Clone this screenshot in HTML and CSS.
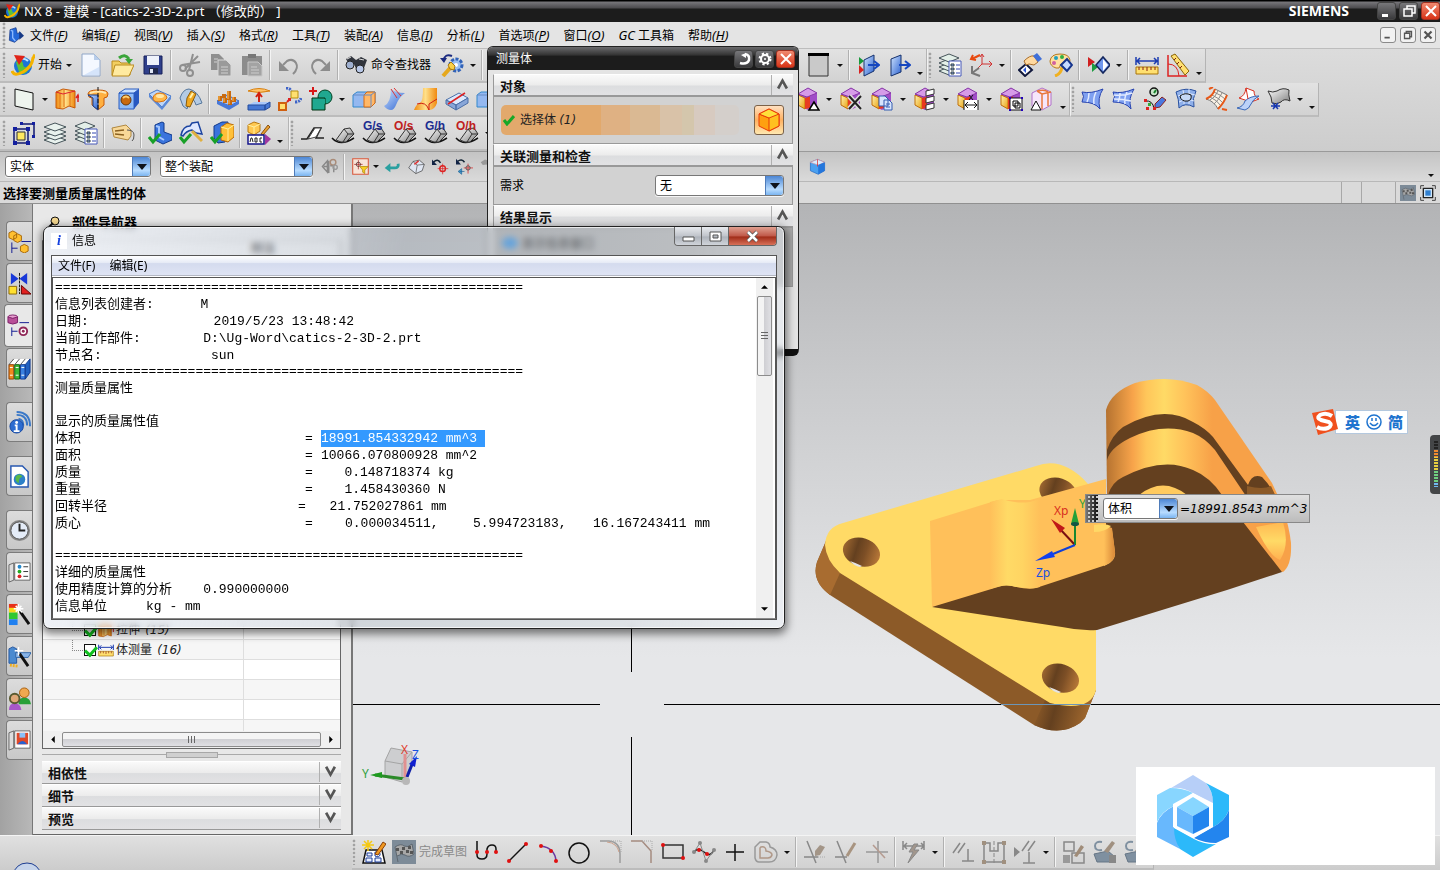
FILE: index.html
```html
<!DOCTYPE html>
<html lang="zh-CN">
<head>
<meta charset="utf-8">
<title>NX 8 - 建模</title>
<link rel="stylesheet" href="styles.css">
</head>
<body>
<svg class="sprite" aria-hidden="true">
<defs>
<linearGradient id="gb" x1="0" y1="0" x2="1" y2="1"><stop offset="0" stop-color="#cfe4ff"/><stop offset="1" stop-color="#2c62d0"/></linearGradient>
<linearGradient id="go" x1="0" y1="0" x2="1" y2="0"><stop offset="0" stop-color="#f08a10"/><stop offset=".5" stop-color="#ffe08a"/><stop offset="1" stop-color="#f08a10"/></linearGradient>
<linearGradient id="gy" x1="0" y1="0" x2="1" y2="1"><stop offset="0" stop-color="#fff3b0"/><stop offset="1" stop-color="#e8a010"/></linearGradient>
<linearGradient id="gg" x1="0" y1="0" x2="1" y2="1"><stop offset="0" stop-color="#fff"/><stop offset="1" stop-color="#7d7d7d"/></linearGradient>
</defs>
<symbol id="nx" viewBox="0 0 24 24"><circle cx="12" cy="13" r="9" fill="#1c74d8"/><path d="M5 9q6-4 7 2t6 1l-2 7q-5 4-8 0z" fill="#5cc23a"/><path d="M9 7q4-3 8 1" stroke="#bfe6ff" stroke-width="2" fill="none"/><path d="M1 18q2 6 11 1T22 5q2-2 0-3" fill="none" stroke="#f5b300" stroke-width="3"/><path d="M3 2l11 1-6 9z" fill="#e02418"/></symbol>
<symbol id="part" viewBox="0 0 24 24"><path d="M3 4l9-3 2 9 4-2v8l-8 7-8-3z" fill="#2468d8" stroke="#0d3184"/><path d="M4 5l3 1v10l4 5" stroke="#8bb9ff" stroke-width="2" fill="none"/><path d="M17 6l7 7-7 6z" fill="#173a86"/></symbol>
<symbol id="new" viewBox="0 0 24 24"><path d="M3 1h12l6 6v16H3z" fill="#f4f8ff" stroke="#8fa6c8"/><path d="M15 1v6h6z" fill="#b8cdea"/><path d="M5 22l15-8v8z" fill="#d5e4fa"/></symbol>
<symbol id="open" viewBox="0 0 24 24"><path d="M2 8h7l2 2h9v12H2z" fill="#f2cf60" stroke="#b98a1c"/><path d="M5 12h19l-5 11H2z" fill="#ffeaa0" stroke="#b98a1c"/><path d="M9 5q6-5 10 1" stroke="#3aa53a" stroke-width="3" fill="none"/><path d="M15 6h8l-4 5z" fill="#3aa53a"/></symbol>
<symbol id="save" viewBox="0 0 24 24"><path d="M3 3h18v18H3z" fill="#2f3f8a" stroke="#16205a"/><path d="M6 3h12v9H6z" fill="#eef2fb"/><path d="M8 15h9v6H8z" fill="#20284a"/><path d="M9 16h3v4H9z" fill="#dfe5f5"/></symbol>
<symbol id="cut" viewBox="0 0 24 24"><g fill="none" stroke="#8f8f8f" stroke-width="2"><path d="M7 16L20 3M11 17L15 1M4 12l18-3"/><circle cx="5" cy="15" r="3"/><circle cx="12" cy="20" r="3"/></g></symbol>
<symbol id="copy" viewBox="0 0 24 24"><path d="M2 1h8l5 5v11H2z" fill="#8f8f8f"/><path d="M9 7h8l5 5v11H9z" fill="#9a9a9a" stroke="#d8d8d8"/><path d="M12 14h7M12 17h7M12 20h7M5 6h4M5 9h3" stroke="#d0d0d0"/></symbol>
<symbol id="paste" viewBox="0 0 24 24"><path d="M2 3h20v19H2z" fill="#8c8c8c"/><path d="M8 1h8v4H8z" fill="#777"/><path d="M8 9h10l4 4v10H8z" fill="#a3a3a3" stroke="#c8c8c8"/><path d="M11 14h6M11 17h8M11 20h8" stroke="#ccc"/></symbol>
<symbol id="undo" viewBox="0 0 24 24"><path d="M16 21q6-6 3-11t-9-2l-4 4" fill="none" stroke="#8c8c8c" stroke-width="2"/><path d="M2 8v10h10z" fill="#8c8c8c"/></symbol>
<symbol id="redo" viewBox="0 0 24 24"><path d="M8 21q-6-6-3-11t9-2l4 4" fill="none" stroke="#8c8c8c" stroke-width="2"/><path d="M22 8v10H12z" fill="#8c8c8c"/></symbol>
<symbol id="binoc" viewBox="0 0 24 24"><path d="M2 6l5-3 5 4 5-3 6 3-3 8-6 5-4-9-4 2z" fill="#30343c"/><ellipse cx="6" cy="12" rx="4" ry="4" fill="#9fb0d0" stroke="#222"/><ellipse cx="16" cy="16" rx="4" ry="4" fill="#b8c8e8" stroke="#222"/><path d="M3 6l4-2M15 6l5 1" stroke="#ddd"/></symbol>
<symbol id="gear" viewBox="0 0 24 24"><circle cx="16" cy="12" r="6" fill="#9ac0f4" stroke="#3162b8" stroke-width="3" stroke-dasharray="3 1.5"/><circle cx="16" cy="12" r="2" fill="#fff"/><path d="M3 23l8-9" stroke="#e6a81c" stroke-width="4"/><path d="M8 12l3-3 4 4-1 4-4-1z" fill="#f8d04a" stroke="#a87810"/><path d="M3 8q2-8 9-5" fill="none" stroke="#1a2a80" stroke-width="2"/><path d="M0 5h7l-3 5z" fill="#1a2a80"/></symbol>
<symbol id="frame" viewBox="0 0 24 24"><path d="M2 1h19v22H2z" fill="#c9c9c9" stroke="#333"/><path d="M1 0h21v3H1z"/></symbol>
<symbol id="exita" viewBox="0 0 24 24"><path d="M8 7l10-5v16L8 23z" fill="url(#gb)" stroke="#14306c"/><path d="M3 4l5 4-5 4z" fill="#18983a"/><path d="M3 12l5 5-5 4z" fill="#d82020"/><path d="M12 12h10M18 8l5 4-5 4" fill="none" stroke="#1647c0" stroke-width="2"/></symbol>
<symbol id="exitb" viewBox="0 0 24 24"><path d="M4 6l10-4v17L4 23z" fill="url(#gb)" stroke="#14306c"/><path d="M12 12h10M18 8l5 4-5 4" fill="none" stroke="#1647c0" stroke-width="2"/></symbol>
<symbol id="layer" viewBox="0 0 24 24"><g fill="#e9f2ee" stroke="#46545a"><path d="M1 19l11-4 11 4-11 4z"/><path d="M1 15l11-4 11 4-11 4z"/><path d="M1 11l11-4 11 4-11 4z"/><path d="M1 6l11-4 11 4-11 4z"/></g></symbol>
<symbol id="layerlist" viewBox="0 0 24 24"><g fill="#e3efe8" stroke="#46545a"><path d="M1 18l10-4 10 4-10 4z"/><path d="M1 14l10-4 10 4-10 4z"/><path d="M1 10l10-4 10 4-10 4z"/><path d="M1 5l10-4 10 4-10 4z"/></g><path d="M11 8h12v15H11z" fill="#fff" stroke="#4658b8"/><path d="M13 11h3v2h-3zM13 15h3v2h-3zM13 19h3v2h-3z" fill="#8aa0e8" stroke="#344"/><path d="M18 12h4M18 16h4M18 20h4" stroke="#3448b0"/></symbol>
<symbol id="csys" viewBox="0 0 24 24"><path d="M3 6l8-4M4 2l-2 4 5 1" stroke="#e84a10" stroke-width="2" fill="none"/><path d="M13 2v9h10M11 4l2-3 2 3M20 8l3 3-3 3M13 11L8 16" stroke="#d03030" fill="none"/><path d="M3 13v7l8 3M3 20l7-5" stroke="#777" stroke-width="2" fill="none"/></symbol>
<symbol id="hand" viewBox="0 0 24 24"><path d="M1 17l7-6 6 6-7 6z" fill="#fff" stroke="#10183c" stroke-width="2"/><path d="M5 17l3-3v6z" fill="#2c58d8"/><path d="M6 8q6-6 10-5l4 6-4 3-5-1-3 1z" fill="#ffd9a0" stroke="#a86c28"/><path d="M15 3l4-3 5 6-4 3z" fill="#4070d8"/></symbol>
<symbol id="palette" viewBox="0 0 24 24"><path d="M11 1q9 0 10 6 0 5-6 4-4-1-4 2t-4 2q-6-2-6-7 1-7 10-7z" fill="#ffe0a0" stroke="#b47a20"/><circle cx="7" cy="5" r="2" fill="#20a0c0"/><circle cx="13" cy="4" r="2" fill="#30b040"/><circle cx="5" cy="10" r="2" fill="#d060a0"/><path d="M6 23q6-2 7-9" fill="none" stroke="#f0b020" stroke-width="3"/><path d="M12 12l6-6 5 6-5 6z" fill="#c5d9ff" stroke="#16348c" stroke-width="2"/></symbol>
<symbol id="showhide" viewBox="0 0 24 24"><path d="M2 4l7 5-7 5z" fill="#d02020"/><path d="M6 10l6 4-6 5z" fill="#1c9c40"/><path d="M10 12l7-8 7 8-7 8z" fill="#6f96ec" stroke="#14265c" stroke-width="1.500"/><path d="M17 6v12l5-6z" fill="#fff"/></symbol>
<symbol id="ruler" viewBox="0 0 24 24"><path d="M1 4v8M23 4v8M2 8h20M5 5L2 8l3 3M19 5l3 3-3 3" fill="none" stroke="#1c3cb0" stroke-width="1.500"/><path d="M1 14h22v7H1z" fill="#ffe070" stroke="#a87408"/><path d="M4 14v3M8 14v3M12 14v4M16 14v3M20 14v3" stroke="#8a2010"/></symbol>
<symbol id="angle" viewBox="0 0 24 24"><path d="M2 2v21h19" fill="none" stroke="#d22" stroke-width="1.500"/><path d="M2 11q10 0 11 12" fill="none" stroke="#d22"/><path d="M5 3l4-2 14 17-4 4z" fill="#ffe070" stroke="#8a6408"/><path d="M10 5l-2 2M13 9l-2 2M16 13l-2 2" stroke="#7a2010"/></symbol>
<symbol id="datum" viewBox="0 0 24 24"><path d="M3 2l18 4v17L3 19z" fill="#eef4ee" stroke="#111"/></symbol>
<symbol id="extrude" viewBox="0 0 24 24"><path d="M1 5l7-3 12 2v17l-6-2-6 3-7-1z" fill="url(#go)" stroke="#c85a08"/><path d="M5 6v15M9 3v17M15 5v14" stroke="#e07010"/><path d="M1 5l7 2 12-3" fill="none" stroke="#d23"/><path d="M23 15V8M21 11l2-3 1 3" stroke="#d22" stroke-width="1.500" fill="none"/></symbol>
<symbol id="revolve" viewBox="0 0 24 24"><path d="M2 7q0-4 10-4t10 4q0 4-4 4v7l-6 5-6-5v-7q-4 0-4-4z" fill="#ffb040" stroke="#c85a08"/><path d="M2 8l5 3v8l5 4V8z" fill="url(#gb)" stroke="#123a90"/><path d="M4 6q8-3 16 0" stroke="#ffe8b0" stroke-width="2" fill="none"/><path d="M12 0v24" stroke="#111" stroke-dasharray="4 2"/></symbol>
<symbol id="hole" viewBox="0 0 24 24"><path d="M2 6h15v16H2z" fill="#8fbcf8" stroke="#2a5cc0"/><path d="M2 6l6-4h14l-5 4z" fill="#c8e0ff" stroke="#2a5cc0"/><path d="M17 6l5-4v14l-5 6z" fill="#2858c0"/><circle cx="9" cy="13" r="5" fill="#c86a10" stroke="#6a3808"/><path d="M6 11q3-3 6 0" stroke="#ffd070" stroke-width="2" fill="none"/></symbol>
<symbol id="pocket" viewBox="0 0 24 24"><path d="M1 7l8-4 14 6-9 11z" fill="#bcd6fa" stroke="#4878c8"/><path d="M1 7v3l13 13 9-11V9l-9 11z" fill="#5c8ad8"/><path d="M5 11q1-5 7-5t7 5q-2 4-8 4t-6-4z" fill="#ffb84a" stroke="#d87010"/><ellipse cx="12" cy="9" rx="4" ry="2" fill="#ffe6a8"/></symbol>
<symbol id="groove" viewBox="0 0 24 24"><path d="M1 11Q4 2 10 2q9 2 13 14l-6 2q-2-7-6-6l-3 10-4-3z" fill="#b4cbe4" stroke="#56779c"/><path d="M8 11l4-7 5 3-6 13-4-1z" fill="#f0a820" stroke="#8c5c08"/><path d="M11 11l3-5" stroke="#fff3b0" stroke-width="2"/></symbol>
<symbol id="pattern" viewBox="0 0 24 24"><path d="M1 14l10-6 12 6-9 5z" fill="#a8c4f8" stroke="#3c68c0"/><path d="M1 14v3l12 6 10-6v-3l-9 5z" fill="#4878d8"/><path d="M4 14V9M9 16v-5M14 18v-5M8 11V7M13 13V8M18 15v-5M13 9V4" stroke="#c86a10" stroke-width="4"/><path d="M3 13V9M8 15v-4M13 17v-4M12 12V8M17 14v-4M12 8V4" stroke="#ffc058"/></symbol>
<symbol id="offset" viewBox="0 0 24 24"><path d="M1 4q11-5 22 0-11 3-22 0z" fill="#ffc468" stroke="#d88010"/><path d="M12 15V7M9 10l3-4 3 4" stroke="#d02010" stroke-width="2" fill="none"/><path d="M1 18l6-3h16l-5 3z" fill="#a9c8fa"/><path d="M1 18h17v5H1zM18 18l5-3v5l-5 3z" fill="#4678d4" stroke="#254c9c"/></symbol>
<symbol id="instance" viewBox="0 0 24 24"><path d="M1 16h7v7H1z" fill="#ffe070" stroke="#d06010" stroke-width="2"/><path d="M13 4h7v7h-7z" fill="#ffe070" stroke="#b89010"/><path d="M9 15l3-3M10 12h2v2" stroke="#d22" stroke-width="2" fill="none"/><path d="M8 1q4 0 5 3M17 15q5 0 6-4" stroke="#3d63c8" stroke-width="3" fill="none" stroke-dasharray="2 1"/></symbol>
<symbol id="bool" viewBox="0 0 24 24"><circle cx="16" cy="10" r="7" fill="#20a890" stroke="#042"/><path d="M3 11h13v12H3z" fill="#20a890" stroke="#031"/><path d="M9 12h7v5q-6-1-7-5z" fill="#20a890"/><path d="M4 0v8M0 4h8" stroke="#d81818" stroke-width="2"/></symbol>
<symbol id="trim" viewBox="0 0 24 24"><path d="M1 8l4-3h18v11l-4 4H1z" fill="#94b8f0" stroke="#38c"/><path d="M12 8l3-3h8v11l-4 4h-7z" fill="#ffb868" stroke="#d86a10"/><path d="M1 8h18v12M19 8l4-3" fill="none" stroke="#688cc4"/></symbol>
<symbol id="sheet" viewBox="0 0 24 24"><path d="M8 2q5 4 14 4-6 4-9 12-2 5-5 5-4 0-7-4 7-3 7-17z" fill="url(#gb)"/><path d="M8 2l6 9M11 1l7 8" stroke="#d33"/></symbol>
<symbol id="boot" viewBox="0 0 24 24"><path d="M9 1h14v15q-2 6-7 7H0q2-6 7-8 2-2 2-14z" fill="url(#go)"/><path d="M3 17q9-3 12 6M15 17l8-5M15 17v6" stroke="#d02010" fill="none"/></symbol>
<symbol id="split" viewBox="0 0 24 24"><path d="M1 13l13-7 9 5-12 7z" fill="#dce9fc" stroke="#4b6fa8"/><path d="M1 13v4l10 6v-5zM11 18l12-7v5l-12 7z" fill="#88a6d8" stroke="#4b6fa8"/><path d="M3 17L20 6" stroke="#d22" stroke-width="1.500"/></symbol>
<symbol id="copyface" viewBox="0 0 24 24"><path d="M2 8h14v14H2zM9 3h13v13" fill="none" stroke="#101870" stroke-width="1.500"/><path d="M5 11h8v8H5z" fill="#ffe860" stroke="#333"/><g fill="#1420a0"><path d="M1 6h4v4H1zM14 6h4v4h-4zM1 20h4v4H1zM14 20h4v4h-4zM8 1h3v3H8zM20 1h3v3h-3zM20 14h3v3h-3z"/></g></symbol>
<symbol id="tag" viewBox="0 0 24 24"><path d="M1 7l14-3 5 5v6l-3 4-14-3z" fill="#f8d898" stroke="#b08840"/><path d="M4 10l9-1M4 13l9 1" stroke="#8a6020" stroke-width="1.500"/><path d="M16 9q7 0 7 5t-2 6" fill="none" stroke="#555"/></symbol>
<symbol id="chk1" viewBox="0 0 24 24"><path d="M7 4l7-3 2 1v9l8 3v5l-9 4-8-4z" fill="#3a74dc" stroke="#123a8c"/><path d="M8 5l3 1v10l5 3" fill="none" stroke="#a6c8ff" stroke-width="2"/><path d="M1 16l4 5 7-8" fill="none" stroke="#18a028" stroke-width="3"/></symbol>
<symbol id="chk2" viewBox="0 0 24 24"><path d="M2 14q2-9 9-9l2-3 6-1 4 12-6-1-4-3q-6 1-9 6z" fill="#dfe8ff" stroke="#1c44a0" stroke-width="1.500"/><path d="M13 10l10 10" stroke="#e0b040" stroke-width="3"/><path d="M1 16l4 5 7-8" fill="none" stroke="#18a028" stroke-width="3"/></symbol>
<symbol id="chk3" viewBox="0 0 24 24"><path d="M4 5l8-4h6l-3 20-7 1-4-5z" fill="#3a74dc" stroke="#123a8c"/><path d="M11 6l6-4 7 2v12l-6 5-7-2z" fill="#ffc038" stroke="#b86808"/><path d="M11 6l7 2 6-4M18 8v12" fill="none" stroke="#fff0a0"/><path d="M1 16l4 5 7-8" fill="none" stroke="#18a028" stroke-width="3"/></symbol>
<symbol id="abc" viewBox="0 0 24 24"><path d="M1 4l6-3 6 2v7l-6 4-6-3z" fill="#ffc850" stroke="#b87810"/><path d="M1 4l6 2 6-3M7 6v7" fill="none" stroke="#fff0a0"/><path d="M14 13l7-9 2 2-7 8z" fill="#e8a030" stroke="#8a5010"/><path d="M1 14h16v9H1z" fill="#fff" stroke="#15158a" stroke-width="1.500"/><path d="M3 21l1-4h1l1 4M8 17h2v4H8zM15 17h-2v4h2" fill="none" stroke="#222"/><path d="M18 13l6 5-6 6z" fill="#a038a0"/></symbol>
<symbol id="prism0" viewBox="0 0 24 24"><path d="M1 18h6l7-11h7l-5 10h8" fill="#e8e8e8" stroke="#222" stroke-width="1.500"/><path d="M8 18l7-11h6l-5 9z" fill="#fff" stroke="#444"/></symbol>
<symbol id="prism" viewBox="0 0 24 24"><path d="M1 17q8 9 22 0" fill="none" stroke="#111" stroke-width="1.500"/><path d="M5 19l8-11 6-1 4 6-8 8q-5 1-10-2z" fill="url(#gg)" stroke="#333"/><path d="M13 8l4 5-5 8M17 13l6 0" fill="none" stroke="#333"/></symbol>
<symbol id="face" viewBox="0 0 24 24"><path d="M2 7l10-6 9 5v12l-9 5-10-5z" fill="#a04cc8"/><path d="M2 8l7 3v11l-7-4z" fill="url(#gy)" stroke="#c07008"/><path d="M9 11l5-2v12l-5 1z" fill="#e83a20"/><path d="M2 7l10-6 9 5-10 4z" fill="#d69be8" stroke="#8838a8"/></symbol>
<symbol id="m-tri" viewBox="0 0 24 24"><path d="M13 23l5-8 5 8z" fill="#fff" stroke="#000" stroke-width="1.500"/></symbol>
<symbol id="m-x" viewBox="0 0 24 24"><path d="M10 9l12 13M22 9L10 22" stroke="#ddd" stroke-width="5"/><path d="M10 9l12 13M22 9L10 22" stroke="#222" stroke-width="2"/></symbol>
<symbol id="m-copy" viewBox="0 0 24 24"><path d="M9 9h6l3 3v7H9zM14 13h5l3 3v7h-8z" fill="#d6e4fc" stroke="#345cb0"/><path d="M16 17h4M16 20h4" stroke="#345cb0"/></symbol>
<symbol id="m-list" viewBox="0 0 24 24"><path d="M13 4l8-2v5l-8 2zM13 11l8-2v5l-8 2zM13 18l8-2v5l-8 2z" fill="#fff" stroke="#333"/></symbol>
<symbol id="m-dist" viewBox="0 0 24 24"><path d="M8 13h14v10H8z" fill="#fff"/><path d="M8 13v10M22 13v10M9 18h12M12 15l-3 3 3 3M18 15l3 3-3 3M13 8l4 5M17 8l-4 5" stroke="#111" fill="none"/></symbol>
<symbol id="m-sq" viewBox="0 0 24 24"><path d="M11 11h12v12H11z" fill="#fff" stroke="#111"/><path d="M14 14h5v5h-5zM16 16h5v5h-5z" fill="none" stroke="#000"/><path d="M10 10h2v2h-2zM22 10h2v2h-2zM10 22h2v2h-2zM22 22h2v2h-2z" fill="#20b"/></symbol>
<symbol id="ghost" viewBox="0 0 24 24"><path d="M2 6l10-5 9 4v13l-9 5-10-4z" fill="#f6e6fa" stroke="#b070c8"/><path d="M7 4l5 3v15M12 7l9-2M7 4q8-2 11 1v14" fill="none" stroke="#e8783c" stroke-width="1.500"/><path d="M1 23l5-9 5 9z" fill="#fff" stroke="#111"/></symbol>
<symbol id="surf1" viewBox="0 0 24 24"><path d="M1 5Q10 7 22 2 16 11 19 22 14 15 1 15 4 9 1 5z" fill="#7fa0f0" stroke="#2844b0"/><path d="M8 6q0 5-2 9M15 5q-3 6-2 12" fill="none" stroke="#e4ecff" stroke-width="1.500"/></symbol>
<symbol id="surf2" viewBox="0 0 24 24"><path d="M1 5Q10 7 22 2 16 11 19 22 14 15 1 15 4 9 1 5z" fill="#7fa0f0" stroke="#2844b0"/><path d="M8 6q0 5-2 9M15 5q-3 6-2 12M2 8q10 1 18-2M2 12q9 0 17 2" fill="none" stroke="#e4ecff" stroke-width="1.500"/></symbol>
<symbol id="studio" viewBox="0 0 24 24"><circle cx="11" cy="5" r="4" fill="#c9e6c9" stroke="#111" stroke-width="1.500"/><path d="M13 3l-2 3" stroke="#19822a" stroke-width="2"/><path d="M2 14q8-1 9 8" fill="none" stroke="#111"/><path d="M12 17l7-7 4 3-6 7-5 1z" fill="#4a78e0" stroke="#822"/><path d="M1 12h3v3H1zM3 20h3v3H3zM10 20h3v3h-3z" fill="#d22"/><path d="M5 16h3v3H5z" fill="#3a3"/></symbol>
<symbol id="surf3" viewBox="0 0 24 24"><path d="M2 5Q12 0 22 4 18 11 20 20 11 15 5 21 5 12 2 5z" fill="#8fb0ea" stroke="#2850a0"/><path d="M4 9q9-4 17-1M5 15q8-4 15-1M9 3q2 8 1 14M15 2q0 8 0 15" fill="none" stroke="#dfe9ff"/><path d="M6 9q5-4 11-1 1 5-3 6-7 1-8-5z" fill="#c6d8f6" stroke="#111"/></symbol>
<symbol id="surf4" viewBox="0 0 24 24"><path d="M1 12Q8 9 10 2l12 6q-3 8-9 14Q9 14 1 12z" fill="#fbf3e6" stroke="#777"/><path d="M5 10q7 3 11 9M7 8q7 3 11 8M9 5q7 3 11 7M17 6q-4 8-8 11M13 4q-3 7-8 9" fill="none" stroke="#888"/><path d="M1 12Q8 9 10 2M22 8q-3 8-9 14M4 2l4-2M17 22l5 1" fill="none" stroke="#e85818" stroke-width="2"/></symbol>
<symbol id="surf5" viewBox="0 0 24 24"><path d="M3 11Q9 9 10 1l8 3q0 6 5 8l-8 3z" fill="#fff" stroke="#d83020"/><path d="M1 21Q7 20 9 14q5-5 14-5-6 3-8 8-2 5-6 6z" fill="#bcd2f8" stroke="#3a68b8"/><path d="M10 1l2 11" stroke="#d83020"/></symbol>
<symbol id="surf6" viewBox="0 0 24 24"><path d="M1 4q5 2 9 0 6-4 12-1-1 4 1 11-6-3-9 1-4 3-9 1 0-6-4-12z" fill="url(#gg)" stroke="#333"/><path d="M6 16l5 6M11 16l-5 6M4 19h9" stroke="#1838b0" stroke-width="1.500"/></symbol>
<symbol id="link" viewBox="0 0 24 24"><path d="M2 12l7-8v16zM11 4v17M13 11h5v9M4 12h7" fill="none" stroke="#888" stroke-width="2"/><circle cx="17" cy="6" r="4" fill="none" stroke="#a98b78" stroke-width="2"/><circle cx="20" cy="13" r="3" fill="none" stroke="#999" stroke-width="2"/></symbol>
<symbol id="selfilter" viewBox="0 0 24 24"><path d="M1 1h22v22H1z" fill="#f7e4d8" stroke="#d8583c" stroke-width="1.500"/><path d="M9 3v13M3 9h12" stroke="#a22"/><circle cx="9" cy="9" r="3" fill="none" stroke="#422"/><path d="M11 12h12l-5 5v5l-3-2v-3z" fill="#f8d020" stroke="#a88408"/></symbol>
<symbol id="turn" viewBox="0 0 24 24"><path d="M5 14h10q6 0 5-6" fill="none" stroke="#2aa0a0" stroke-width="4"/><path d="M9 7v13l-8-6z" fill="#2aa0a0"/></symbol>
<symbol id="eraser" viewBox="0 0 24 24"><path d="M1 14l6-9 9-2 7 6-3 9-9 4z" fill="#dfe6f2" stroke="#444"/><path d="M7 5l6 5-2 12M13 10l10-1" fill="none" stroke="#555"/><path d="M9 9l6-5" stroke="#d33" stroke-width="2"/></symbol>
<symbol id="pickb" viewBox="0 0 24 24"><path d="M2 6q6-6 10 1" fill="none" stroke="#123" stroke-width="2"/><path d="M0 2v8h7z" fill="#124"/><path d="M15 8v15M8 15h15" stroke="#d22"/><circle cx="15" cy="15" r="4" fill="none" stroke="#d22" stroke-width="2"/></symbol>
<symbol id="pickc" viewBox="0 0 24 24"><path d="M2 5q6-5 10 1" fill="none" stroke="#123" stroke-width="2"/><path d="M0 1v8h7z" fill="#124"/><path d="M17 8v14M11 14h13" stroke="#d22"/><circle cx="17" cy="14" r="3" fill="none" stroke="#333"/><path d="M12 19H5M8 15l-5 4 5 4z" fill="#49c" stroke="#269"/></symbol>
<symbol id="hammer" viewBox="0 0 24 24"><path d="M1 6l6-4 9 3 6 10-4 7-3-10-6-3-5 1z" fill="#999"/></symbol>
<symbol id="cubeb" viewBox="0 0 24 24"><path d="M2 6l10-4 10 4v12l-9 5-11-5z" fill="#4aa0f0" stroke="#2468c0"/><path d="M2 6l11 4 9-4-10-4z" fill="#d4ecff" stroke="#e09aa0"/><path d="M13 10v13l9-5V6z" fill="#2476dc"/><path d="M12 2v10" stroke="#d22"/></symbol>
<symbol id="flag" viewBox="0 0 24 24"><path d="M0 0h24v24H0z" fill="#7d8b98"/><path d="M6 22L3 7q6-4 9-1 4 2 8-2l2 10q-5 4-9 1-3-2-8 1" fill="#a7a7a7" stroke="#5d6770"/><path d="M4 8h3v3H4zM10 7h3v3h-3zM16 6h3v3h-3zM8 11h3v3H8zM14 10h3v3h-3zM18 11h3v3h-3z" fill="#555"/></symbol>
<symbol id="fullscr" viewBox="0 0 24 24"><path d="M1 6V1h5M18 1h5v5M23 18v5h-5M6 23H1v-5" fill="none" stroke="#444" stroke-width="1.500"/><path d="M5 5h14v14H5z" fill="#cfe5f7" stroke="#222" stroke-width="2"/><path d="M8 8h8v8H8z" fill="#2f7fd0"/></symbol>
<symbol id="sketch" viewBox="0 0 24 24"><path d="M4 10h16l3 13H1z" fill="#fff" stroke="#111" stroke-width="1.500"/><path d="M5 13h5v3H5zM4 18h6v4H4zM13 12q6 0 5 3t-5 1zM13 18h6v4h-6z" fill="#e8efff" stroke="#1c3c98"/><path d="M6 0v11M0 5h12M2 1l8 8M10 1L2 9" stroke="#f5c810" stroke-width="1.500"/><path d="M13 14l8-12 3 2-8 11z" fill="#f09820" stroke="#8a4008"/></symbol>
<symbol id="profile" viewBox="0 0 24 24"><path d="M2 1v14q0 4 5 4t5-5V9q1-4 5-4t4 4v4" fill="none" stroke="#111" stroke-width="1.500"/><g fill="#e01010"><circle cx="2" cy="12" r="2"/><circle cx="12" cy="12" r="2"/><circle cx="21" cy="12" r="2"/></g></symbol>
<symbol id="line" viewBox="0 0 24 24"><path d="M3 21L20 4" stroke="#111" stroke-width="1.500"/><circle cx="3" cy="21" r="2" fill="#e01010"/><circle cx="20" cy="4" r="2" fill="#e01010"/></symbol>
<symbol id="arc" viewBox="0 0 24 24"><path d="M4 6q14 2 15 15" fill="none" stroke="#6a3aa0" stroke-width="1.500"/><g fill="#e01010"><circle cx="4" cy="6" r="2"/><circle cx="14" cy="11" r="2"/><circle cx="19" cy="21" r="2"/></g></symbol>
<symbol id="circle" viewBox="0 0 24 24"><circle cx="11" cy="13" r="10" fill="none" stroke="#111" stroke-width="1.500"/></symbol>
<symbol id="fillet" viewBox="0 0 24 24"><path d="M1 1h9q11 1 11 13v9" fill="none" stroke="#9c9c9c" stroke-width="1.500"/><path d="M8 2q10 1 12 10" fill="none" stroke="#cda28c"/><path d="M12 1h10v11" fill="none" stroke="#aaa" stroke-dasharray="1 1"/></symbol>
<symbol id="chamfer" viewBox="0 0 24 24"><path d="M1 1h11l9 10v12" fill="none" stroke="#a58c80" stroke-width="1.500"/><path d="M12 1h10v10" fill="none" stroke="#aaa" stroke-dasharray="1 1"/></symbol>
<symbol id="rect" viewBox="0 0 24 24"><path d="M2 5h20v13H2z" fill="none" stroke="#333" stroke-width="1.500"/><circle cx="2" cy="5" r="2" fill="#e01010"/><circle cx="22" cy="18" r="2" fill="#e01010"/></symbol>
<symbol id="spline" viewBox="0 0 24 24"><path d="M2 12Q6 8 9 10t6 4q4 2 7-4" fill="none" stroke="#222" stroke-width="1.500"/><path d="M2 12L8 3l6 18 8-11" fill="none" stroke="#888"/><g fill="#888"><circle cx="8" cy="3" r="2"/><circle cx="2" cy="12" r="2"/><circle cx="14" cy="21" r="2"/><circle cx="22" cy="10" r="2"/></g><g fill="#e01010"><circle cx="7" cy="10" r="2"/><circle cx="15" cy="14" r="2"/></g></symbol>
<symbol id="plus" viewBox="0 0 24 24"><path d="M12 4v17M3 12h18" stroke="#111" stroke-width="1.500"/></symbol>
<symbol id="offs" viewBox="0 0 24 24"><path d="M6 2h6q4 1 4 5 7 2 7 8-1 7-8 7H5q-3 0-4-4V7z" fill="none" stroke="#999" stroke-width="1.500"/><path d="M7 7q5-1 5 4 6 1 6 4-1 3-4 3H6V8z" fill="none" stroke="#b09888" stroke-width="1.500"/></symbol>
<symbol id="qtrim" viewBox="0 0 24 24"><path d="M1 17h14M4 1l9 22" stroke="#888" stroke-width="1.500"/><path d="M15 17h8" stroke="#aaa" stroke-dasharray="1 1"/><path d="M12 11l5-6 5 2-5 8-5 1z" fill="#a39587"/></symbol>
<symbol id="qext" viewBox="0 0 24 24"><path d="M1 17h12M3 1l9 22" stroke="#888" stroke-width="1.500"/><path d="M13 16l8-13" stroke="#a89480" stroke-width="3"/></symbol>
<symbol id="corner" viewBox="0 0 24 24"><path d="M13 1v22M1 12h22" stroke="#999" stroke-width="1.500"/><path d="M8 5l12 13" stroke="#b59b90" stroke-width="1.500"/></symbol>
<symbol id="dim" viewBox="0 0 24 24"><path d="M1 1v9M22 1v9M2 6h20M5 3L2 6l3 3M19 3l3 3-3 3" stroke="#888" fill="none" stroke-width="1.500"/><path d="M12 4L7 12h4L6 23l11-13h-5l4-6z" fill="#a2968c" stroke="#888"/></symbol>
<symbol id="cons" viewBox="0 0 24 24"><path d="M2 13L9 3M7 13l7-10M17 9v12M11 21h12" stroke="#888" stroke-width="1.500"/></symbol>
<symbol id="auto" viewBox="0 0 24 24"><path d="M2 3v19h20V3h-6v8H8V3z" fill="none" stroke="#888" stroke-width="1.500"/><path d="M12 1v22" stroke="#888" stroke-dasharray="4 2"/><path d="M0 1h4v4H0zM20 1h4v4h-4zM0 20h4v4H0zM20 20h4v4h-4z" fill="#a0907f"/></symbol>
<symbol id="cons2" viewBox="0 0 24 24"><path d="M1 7l6 5-6 5z" fill="#888"/><path d="M9 11L16 1M15 11l7-10M16 12v11M10 23h12" stroke="#888" stroke-width="1.500"/></symbol>
<symbol id="pencilbox" viewBox="0 0 24 24"><path d="M2 2h10v9H2zM10 13h12v10H10z" fill="none" stroke="#888" stroke-width="1.500"/><path d="M1 15h7v8H1z" fill="#999"/><path d="M12 16l7-11 3 2-7 10z" fill="#a08c78"/></symbol>
<symbol id="tools" viewBox="0 0 24 24"><path d="M9 2Q2 1 2 6t7 4" fill="none" stroke="#7f90a0" stroke-width="2"/><path d="M1 14l14-3 7 6-4 5H4z" fill="#7f90a0" stroke="#667686"/><path d="M11 11l8-10 3 2-7 10z" fill="#a09080"/><path d="M16 15h7v8h-7z" fill="#888"/></symbol>
<symbol id="asm" viewBox="0 0 24 24"><g fill="#ffc030" stroke="#a86808"><path d="M1 3l4-2 4 2v5l-4 2-4-2zM6 6l4-2 4 2v5l-4 2-4-2zM13 17l4-2 4 2v5l-4 2-4-2z"/></g><path d="M4 13v11M4 19h6M14 12h10" stroke="#101890"/></symbol>
<symbol id="constr" viewBox="0 0 24 24"><path d="M3 1l8 6-8 6zM20 1l-8 6 8 6z" fill="#1838d8"/><path d="M12 1v22" stroke="#111" stroke-dasharray="3 1"/><path d="M1 15h8v8H1z" fill="#ffe030" stroke="#8a6808"/><path d="M14 14l10 9H14z" fill="#e02020" stroke="#600"/></symbol>
<symbol id="partnav" viewBox="0 0 24 24"><ellipse cx="6" cy="3" rx="5" ry="2" fill="#e8a0d0" stroke="#7c2068"/><path d="M1 3v6q5 3 10 0V3q-5 3-10 0z" fill="#b85098" stroke="#7c2068"/><path d="M5 14v9M5 18h6M13 9h10" stroke="#101890"/><circle cx="17" cy="18" r="4" fill="#fff" stroke="#902858" stroke-width="2"/><circle cx="17" cy="18" r="1.500" fill="#902858"/></symbol>
<symbol id="books" viewBox="0 0 24 24"><path d="M1 8l5-6h17v14l-5 7H1z" fill="#fff"/><path d="M1 8h5v15H1z" fill="#f0881c" stroke="#8a4008"/><path d="M7 8h5v15H7z" fill="#3cb838" stroke="#126012"/><path d="M13 8h5v15h-5z" fill="#3a80e0" stroke="#103a90"/><path d="M18 8l5-6v14l-5 7z" fill="#2060c0" stroke="#103a90"/><path d="M1 8l5-6M7 8l5-6M13 8l5-6" stroke="#555"/><path d="M2 11h3M8 11h3M14 11h3M2 19h3M8 19h3M14 19h3" stroke="#fff"/></symbol>
<symbol id="info" viewBox="0 0 24 24"><path d="M9 4q11 0 11 11M9 1q14 0 14 15M11 8q5 1 5 7" fill="none" stroke="#3a78c8" stroke-width="2"/><circle cx="9" cy="16" r="7" fill="#2c6cd0" stroke="#1848a0"/><path d="M7 15h2v6M6 21h6" stroke="#fff" stroke-width="2" fill="none"/><circle cx="9" cy="12" r="1.500" fill="#fff"/></symbol>
<symbol id="web" viewBox="0 0 24 24"><path d="M3 1h12l6 6v16H3z" fill="#fff" stroke="#2858b0" stroke-width="1.500"/><circle cx="12" cy="15" r="6" fill="#2c80c8"/><path d="M8 12q4-4 7 0l-3 2-1 5q-4-2-3-7z" fill="#58b848"/></symbol>
<symbol id="clock" viewBox="0 0 24 24"><circle cx="12" cy="12" r="11" fill="#888"/><circle cx="12" cy="12" r="9" fill="#e4ecf8" stroke="#555"/><path d="M12 5v7h6" fill="none" stroke="#222" stroke-width="2"/></symbol>
<symbol id="roles" viewBox="0 0 24 24"><path d="M1 4l5-2v18l-5 2z" fill="#ddd" stroke="#666"/><path d="M7 2h16v18H7z" fill="#fff" stroke="#666"/><circle cx="12" cy="6" r="2" fill="#28c"/><circle cx="12" cy="11" r="2" fill="#2a2"/><circle cx="12" cy="16" r="2" fill="#d22"/><path d="M16 6h5M16 11h5M16 16h5" stroke="#333"/></symbol>
<symbol id="wand" viewBox="0 0 24 24"><path d="M1 1h9v5H1z" fill="#e83018"/><path d="M1 5h9v5H1z" fill="#f8d818"/><path d="M1 10h9v7H1z" fill="#30c830"/><path d="M1 17h9v6H1z" fill="#2080f0"/><path d="M12 8l10 14" stroke="#111" stroke-width="3"/><path d="M11 1v10M6 6h10M8 3l7 7M14 3l-6 6" stroke="#fff" stroke-width="1.500"/></symbol>
<symbol id="wand2" viewBox="0 0 24 24"><path d="M1 4l4-2 4 2v15H1z" fill="#4a8ad0" stroke="#2858a0"/><path d="M8 8h16l-3 5H8z" fill="#88b4e8" stroke="#3468a8"/><path d="M12 9l9 13" stroke="#111" stroke-width="3"/><path d="M2 21l8 1" stroke="#f0b020" stroke-width="3" stroke-dasharray="2 1"/><path d="M11 2v9M7 6h9" stroke="#fff" stroke-width="1.500"/></symbol>
<symbol id="people" viewBox="0 0 24 24"><path d="M11 18q0-7 6-7t7 7z" fill="#28a038"/><circle cx="17" cy="6" r="5" fill="#f0a850" stroke="#a86010"/><path d="M1 24q0-7 6-7t7 7z" fill="#a858c8"/><circle cx="7" cy="12" r="5" fill="#e0a878" stroke="#5a5a30" stroke-width="2"/></symbol>
<symbol id="photo" viewBox="0 0 24 24"><path d="M1 4l5-2v18l-5 2z" fill="#ddd" stroke="#666"/><path d="M7 2h16v18H7z" fill="#fff" stroke="#666"/><path d="M9 4h12v12H9z" fill="#e04828"/><path d="M12 4h6v5h-6z" fill="#8ac0f8"/><path d="M10 16q5-7 10 0z" fill="#2860d0"/></symbol>
</svg>

<div class="app">
<header class="titlebar">
<svg class="i16"><use href="#nx"/></svg>
<h1 class="title">NX 8 - 建模 - [catics-2-3D-2.prt （修改的） ]</h1>
<strong class="brand">SIEMENS</strong>
<div class="winbtns">
<button class="wb" aria-label="最小化"><svg viewBox="0 0 16 16"><path d="M3 11h6v3H3z" fill="#fff"/></svg></button>
<button class="wb" aria-label="还原"><svg viewBox="0 0 16 16"><path d="M6 6V3h8v7h-3M3 6h8v7H3z" fill="none" stroke="#fff" stroke-width="1.500"/></svg></button>
<button class="wb close" aria-label="关闭"><svg viewBox="0 0 16 16"><path d="M3 3l10 10M13 3L3 13" stroke="#fff" stroke-width="2"/></svg></button>
</div>
</header>

<nav class="menubar">
<span class="grip"></span><svg class="i16"><use href="#part"/></svg>
<button class="menu">文件<i>(<u>F</u>)</i></button><button class="menu">编辑<i>(<u>E</u>)</i></button><button class="menu">视图<i>(<u>V</u>)</i></button><button class="menu">插入<i>(<u>S</u>)</i></button><button class="menu">格式<i>(<u>R</u>)</i></button><button class="menu">工具<i>(<u>T</u>)</i></button><button class="menu">装配<i>(<u>A</u>)</i></button><button class="menu">信息<i>(<u>I</u>)</i></button><button class="menu">分析<i>(<u>L</u>)</i></button><button class="menu">首选项<i>(<u>P</u>)</i></button><button class="menu">窗口<i>(<u>O</u>)</i></button><button class="menu"><i>GC</i> 工具箱</button><button class="menu">帮助<i>(<u>H</u>)</i></button>
<div class="docbtns">
<button class="db" aria-label="最小化文档"><svg viewBox="0 0 16 16"><path d="M4 10h6v2H4z" fill="#555"/></svg></button>
<button class="db" aria-label="还原文档"><svg viewBox="0 0 16 16"><path d="M6 6V4h6v6h-2M4 6h6v6H4z" fill="none" stroke="#555" stroke-width="1.500"/></svg></button>
<button class="db" aria-label="关闭文档"><svg viewBox="0 0 16 16"><path d="M4 4l8 8M12 4l-8 8" stroke="#555" stroke-width="2.500"/></svg></button>
</div>
</nav>

<div class="dock">
<div class="row">
<div class="bar lead"><span class="grip"></span>
<button class="start"><svg><use href="#nx"/></svg>开始<span class="tri"></span></button>
<button class="tool" aria-label="新建"><svg><use href="#new"/></svg></button><button class="tool" aria-label="打开"><svg><use href="#open"/></svg></button><button class="tool" aria-label="保存"><svg><use href="#save"/></svg></button><span class="sep"></span>
<button class="tool" aria-label="剪切"><svg><use href="#cut"/></svg></button><button class="tool" aria-label="复制"><svg><use href="#copy"/></svg></button><button class="tool" aria-label="粘贴"><svg><use href="#paste"/></svg></button><span class="sep"></span>
<button class="tool" aria-label="撤消"><svg><use href="#undo"/></svg></button><button class="tool" aria-label="重做"><svg><use href="#redo"/></svg></button><span class="sep"></span>
<button class="finder"><svg><use href="#binoc"/></svg>命令查找器</button>
<button class="tool" aria-label="自定义"><svg><use href="#gear"/></svg></button><span class="caret"></span><span class="sep"></span></div>
<div class="bar inset">
<button class="tool" aria-label="窗口"><svg><use href="#frame"/></svg></button><span class="caret"></span><span class="sep"></span>
<button class="tool" aria-label="完成"><svg><use href="#exita"/></svg></button><button class="tool" aria-label="退出"><svg><use href="#exitb"/></svg></button><span class="caret low"></span></div>
<div class="bar end"><span class="grip"></span>
<button class="tool" aria-label="图层设置"><svg><use href="#layerlist"/></svg></button><button class="tool" aria-label="坐标系"><svg><use href="#csys"/></svg></button><span class="caret"></span><span class="sep"></span>
<button class="tool" aria-label="选择"><svg><use href="#hand"/></svg></button><button class="tool" aria-label="显示"><svg><use href="#palette"/></svg></button><span class="sep"></span>
<button class="tool" aria-label="显示隐藏"><svg><use href="#showhide"/></svg></button><span class="caret"></span><span class="sep"></span>
<button class="tool" aria-label="测量距离"><svg><use href="#ruler"/></svg></button><button class="tool" aria-label="测量角度"><svg><use href="#angle"/></svg></button><span class="caret low"></span></div>
</div>
<div class="row">
<div class="bar lead"><span class="grip"></span>
<button class="tool" aria-label="基准平面"><svg><use href="#datum"/></svg></button><span class="caret"></span>
<button class="tool" aria-label="拉伸"><svg><use href="#extrude"/></svg></button><button class="tool" aria-label="回转"><svg><use href="#revolve"/></svg></button><button class="tool" aria-label="孔"><svg><use href="#hole"/></svg></button><button class="tool" aria-label="腔体"><svg><use href="#pocket"/></svg></button><button class="tool" aria-label="槽"><svg><use href="#groove"/></svg></button><span class="sep"></span>
<button class="tool" aria-label="阵列"><svg><use href="#pattern"/></svg></button><button class="tool" aria-label="偏置"><svg><use href="#offset"/></svg></button><button class="tool" aria-label="引用"><svg><use href="#instance"/></svg></button><button class="tool" aria-label="求和"><svg><use href="#bool"/></svg></button><span class="caret"></span>
<button class="tool" aria-label="修剪体"><svg><use href="#trim"/></svg></button><button class="tool" aria-label="片体"><svg><use href="#sheet"/></svg></button><button class="tool" aria-label="边倒圆"><svg><use href="#boot"/></svg></button><button class="tool" aria-label="拆分"><svg><use href="#split"/></svg></button><button class="tool" aria-label="抽壳"><svg><use href="#trim"/></svg></button></div>
<div class="bar">
<button class="tool" aria-label="移动面"><svg><use href="#face"/><use href="#m-tri"/></svg></button><span class="caret"></span>
<button class="tool" aria-label="删除面"><svg><use href="#face"/><use href="#m-x"/></svg></button><button class="tool" aria-label="复制面"><svg><use href="#face"/><use href="#m-copy"/></svg></button><span class="caret"></span>
<button class="tool" aria-label="设为共面"><svg><use href="#face"/><use href="#m-list"/></svg></button><span class="caret"></span>
<button class="tool" aria-label="线性尺寸"><svg><use href="#face"/><use href="#m-dist"/></svg></button><span class="caret"></span>
<button class="tool" aria-label="组合面"><svg><use href="#face"/><use href="#m-sq"/></svg></button><button class="tool" aria-label="拉出面"><svg><use href="#ghost"/></svg></button><span class="caret low"></span></div>
<div class="bar end"><span class="grip"></span>
<button class="tool" aria-label="直纹"><svg><use href="#surf1"/></svg></button><button class="tool" aria-label="网格曲面"><svg><use href="#surf2"/></svg></button><button class="tool" aria-label="艺术曲面"><svg><use href="#studio"/></svg></button><button class="tool" aria-label="N 边曲面"><svg><use href="#surf3"/></svg></button><button class="tool" aria-label="扩大"><svg><use href="#surf4"/></svg></button><button class="tool" aria-label="偏置曲面"><svg><use href="#surf5"/></svg></button><button class="tool" aria-label="X 成形"><svg><use href="#surf6"/></svg></button><span class="caret"></span><span class="caret low"></span></div>
</div>
<div class="row">
<div class="bar"><span class="grip"></span>
<button class="tool" aria-label="变换"><svg><use href="#copyface"/></svg></button><button class="tool" aria-label="图层"><svg><use href="#layer"/></svg></button><button class="tool" aria-label="图层类别"><svg><use href="#layerlist"/></svg></button><span class="sep"></span>
<button class="tool" aria-label="属性"><svg><use href="#tag"/></svg></button><span class="sep"></span>
<button class="tool" aria-label="检查体"><svg><use href="#chk1"/></svg></button><button class="tool" aria-label="检查修复"><svg><use href="#chk2"/></svg></button><button class="tool" aria-label="检查装配"><svg><use href="#chk3"/></svg></button><span class="sep"></span>
<button class="tool" aria-label="注释"><svg><use href="#abc"/></svg></button><span class="caret low"></span></div>
<div class="bar"><span class="grip"></span>
<button class="tool" aria-label="截面"><svg><use href="#prism0"/></svg></button><button class="tool" aria-label="圆角"><svg><use href="#prism"/></svg></button><button class="tool tagged"><svg><use href="#prism"/></svg><b>G/s</b></button><button class="tool tagged red"><svg><use href="#prism"/></svg><b>O/s</b></button><button class="tool tagged"><svg><use href="#prism"/></svg><b>G/h</b></button><button class="tool tagged red"><svg><use href="#prism"/></svg><b>O/h</b></button><span class="caret"></span></div>
</div>
</div>

<div class="selbar">
<label class="combo"><select aria-label="类型过滤器"><option>实体</option></select></label>
<label class="combo"><select aria-label="选择范围"><option>整个装配</option></select></label>
<button class="small" aria-label="链接"><svg><use href="#link"/></svg></button><span class="sep"></span>
<button class="small" aria-label="选择过滤"><svg><use href="#selfilter"/></svg></button><span class="caret"></span>
<button class="small" aria-label="返回"><svg><use href="#turn"/></svg></button><button class="small" aria-label="清除"><svg><use href="#eraser"/></svg></button><button class="small" aria-label="上一个"><svg><use href="#pickb"/></svg></button><button class="small" aria-label="下一个"><svg><use href="#pickc"/></svg></button><button class="small" aria-label="捕捉"><svg><use href="#hammer"/></svg></button>
<button class="small solid" aria-label="着色"><svg><use href="#cubeb"/></svg></button>
<span class="caret low last"></span>
</div>

<div class="prompt"><p>选择要测量质量属性的体</p><span class="cell"></span><span class="cell wide"></span><svg class="i16"><use href="#flag"/></svg><svg class="i16"><use href="#fullscr"/></svg></div>

<main class="main">
<aside class="rail">
<button class="tab" aria-label="装配导航器"><svg><use href="#asm"/></svg></button>
<button class="tab" aria-label="约束导航器"><svg><use href="#constr"/></svg></button>
<button class="tab on" aria-label="部件导航器"><svg><use href="#partnav"/></svg></button>
<button class="tab" aria-label="重用库"><svg><use href="#books"/></svg></button>
<button class="tab apart" aria-label="HD3D 工具"><svg><use href="#info"/></svg></button>
<button class="tab apart" aria-label="浏览器"><svg><use href="#web"/></svg></button>
<button class="tab apart" aria-label="历史记录"><svg><use href="#clock"/></svg></button>
<button class="tab" aria-label="系统材料"><svg><use href="#roles"/></svg></button>
<button class="tab" aria-label="可视化"><svg><use href="#wand"/></svg></button>
<button class="tab" aria-label="加工向导"><svg><use href="#wand2"/></svg></button>
<button class="tab" aria-label="角色"><svg><use href="#people"/></svg></button>
<button class="tab" aria-label="系统场景"><svg><use href="#photo"/></svg></button>
</aside>
<section class="nav">
<h2 class="navhead"><svg viewBox="0 0 12 12"><circle cx="7" cy="5" r="4" fill="#f5d890" stroke="#111"/><path d="M5 7l-4 4" stroke="#111" stroke-width="2"/></svg>部件导航器</h2>
<div class="tree">
<div class="colhead"><span>附注</span></div>
<div class="rows">
<div class="trow"><label><input type="checkbox" checked><svg class="i16"><use href="#extrude"/></svg>拉伸 <i>(15)</i></label></div>
<div class="trow last"><label><input type="checkbox" checked><svg class="i16"><use href="#ruler"/></svg>体测量 <i>(16)</i></label></div>
<div class="trow blank"></div><div class="trow blank"></div><div class="trow blank"></div><div class="trow blank cut"></div>
</div>
<div class="hscroll"><button aria-label="向左"><svg viewBox="0 0 4 8"><path d="M4 0v8L0 4z"/></svg></button><span class="thumb"></span><button aria-label="向右"><svg viewBox="0 0 4 8"><path d="M0 0v8l4-4z"/></svg></button></div>
</div>
<div class="split"><span></span></div>
<div class="folds">
<button class="fold"><span>相依性</span><svg viewBox="0 0 24 22"><path d="M7 5l5 9 5-9" fill="none" stroke="#555" stroke-width="3"/></svg></button>
<button class="fold"><span>细节</span><svg viewBox="0 0 24 22"><path d="M7 5l5 9 5-9" fill="none" stroke="#555" stroke-width="3"/></svg></button>
<button class="fold"><span>预览</span><svg viewBox="0 0 24 22"><path d="M7 5l5 9 5-9" fill="none" stroke="#555" stroke-width="3"/></svg></button>
</div>
</section>
<section class="view">
<svg class="scene" viewBox="353 204 1087 631" preserveAspectRatio="xMidYMid slice">
<defs>
<linearGradient id="cyl" gradientUnits="userSpaceOnUse" x1="1106" y1="0" x2="1212" y2="0"><stop offset="0" stop-color="#b57230"/><stop offset=".12" stop-color="#d48a3c"/><stop offset=".25" stop-color="#f7a34a"/><stop offset=".38" stop-color="#ffc65a"/><stop offset=".55" stop-color="#ffda66"/><stop offset=".75" stop-color="#ffc25a"/><stop offset="1" stop-color="#f7a148"/></linearGradient>
<linearGradient id="fil" gradientUnits="userSpaceOnUse" x1="990" y1="0" x2="1040" y2="0"><stop offset="0" stop-color="#ffc05a"/><stop offset=".35" stop-color="#ffda66"/><stop offset=".65" stop-color="#ffd462"/><stop offset="1" stop-color="#ffc05a"/></linearGradient>
<linearGradient id="hol"><stop offset="0" stop-color="#9c6630"/><stop offset=".35" stop-color="#64401f"/><stop offset=".6" stop-color="#7d4f26"/><stop offset="1" stop-color="#b87838"/></linearGradient>
<linearGradient id="cor" gradientUnits="userSpaceOnUse" x1="1035" y1="712" x2="1094" y2="728"><stop offset="0" stop-color="#8c5a28"/><stop offset=".3" stop-color="#64401f"/><stop offset="1" stop-color="#b07232"/></linearGradient>
<linearGradient id="rnd" gradientUnits="userSpaceOnUse" x1="1104" y1="0" x2="1115" y2="0"><stop offset="0" stop-color="#ffc05a"/><stop offset="1" stop-color="#d98838"/></linearGradient>
<linearGradient id="cap" x1="0" y1="0" x2="0" y2="1"><stop offset="0" stop-color="#ffb852"/><stop offset=".5" stop-color="#ffda66"/><stop offset="1" stop-color="#ffb050"/></linearGradient>
</defs>
<path d="M353 704.500h247M664 704.500h776M631.500 627v45M631.500 737v98" stroke="#000" fill="none"/>
<path d="M826 541L817 562Q811 581 830 595L1034 725Q1060 737 1080 723L1085 718L1096 690L900 540z" fill="#8c5a28"/>
<path d="M826 541L817 562Q811 581 830 595L840 573Q826 560 826 541z" fill="#a86c30"/>
<path d="M1045 700L1034 725Q1060 737 1080 723L1085 718L1096 690L1070 680z" fill="url(#cor)"/>
<path d="M1036 466Q1063 456 1088 484L1110 520L1096 629V690Q1090 713 1050 703L840 573Q826 560 825 545Q826 527 843 523z" fill="#ffda66"/>
<ellipse cx="861.500" cy="552" rx="19" ry="14" transform="rotate(18 861 552)" fill="url(#hol)"/>
<ellipse cx="1058" cy="492" rx="19" ry="14" transform="rotate(18 1058 492)" fill="url(#hol)"/>
<ellipse cx="1060.500" cy="678" rx="19" ry="14" transform="rotate(18 1060 678)" fill="url(#hol)"/>
<path d="M850 561q6 2 12 5l-2 1q-6-1-10-6zM1049 687q6 2 12 5l-2 1q-6-1-10-6z" fill="#e4e4e4"/>
<path d="M1106 410Q1111 392 1135 383Q1168 374 1197 385Q1208 391 1215 400L1272 483Q1288 515 1291 543Q1292 565 1283 572L1200 560L1107 495z" fill="url(#cyl)"/>
<path d="M1107 450Q1112 435 1123 427Q1163 404 1193 422Q1205 428 1213 437L1248 485Q1252 473 1262 477Q1270 485 1276 497L1246 496L1215 450Q1205 438 1193 433Q1163 422 1130 438Q1110 448 1107 460z" fill="#64401f"/>
<path d="M1247 486Q1263 490 1271 486L1276 497H1247z" fill="#8c5a28"/>
<path d="M1108 495Q1112 482 1123 477Q1163 456 1193 470Q1210 477 1222 495L1282 572L1227 590L1097 630Q1080 631 1062 627L932 607L1090 490z" fill="#64401f"/>
<path d="M1139 495Q1163 476 1187 495z" fill="#ffca5e"/>
<path d="M1256 527L1283 522Q1290 545 1280 560Q1269 556 1256 527z" fill="url(#cap)"/>
<path d="M930 521L998 500H1030L1106 479V525L1112 530L1115 552Q1116 561 1106 565L1036 588Q1028 590 1012 586Q1004 584 998 587L932 607z" fill="#ffc05a"/>
<path d="M990 502L1002 499Q1015 504 1030 502L1040 499V587Q1030 590 1012 586Q1004 584 990 589z" fill="url(#fil)"/>
<path d="M1104 525L1112 528L1115 552Q1116 561 1104 566z" fill="url(#rnd)"/>
<path d="M1094 525Q1106 523 1111 526Q1105 532 1094 532z" fill="#ffd866"/>
<path d="M1001 704.500h90" stroke="#6c96b8"/>
<path d="M1075 545L1060 529" stroke="#7a1010" stroke-width="2"/><path d="M1051 519l14 9-5 5z" fill="#c01818"/>
<path d="M1075 545V520" stroke="#188830" stroke-width="2"/><path d="M1075 508l4 16h-8z" fill="#22a038"/><ellipse cx="1075" cy="524" rx="4" ry="2" fill="#154"/>
<path d="M1075 545L1053 554" stroke="#1040d8" stroke-width="2"/><path d="M1035 561l17-10 3 6z" fill="#1040f0"/>
<g class="axis"><text x="1054" y="515" fill="#d83020">Xp</text><text x="1079" y="508" fill="#30a040">Y</text><text x="1036" y="577" fill="#1850e0">Zp</text></g>
<g fill="#c2c3c4" fill-opacity=".7" stroke="#a4a4a4"><path d="M385 761l6-13 21 4v12l-10 18-17-5z"/><path d="M385 761l17 3 10-12M402 764v16" fill="none"/></g>
<path d="M405 781V754" stroke="#e09090" stroke-width="3"/><path d="M405 779L375 775" stroke="#2a8a28" stroke-width="3"/><path d="M370 775l12-3v6z" fill="#1f9a20"/><path d="M407 777l6-15" stroke="#1020a8" stroke-width="3"/><path d="M417 756l-8 8 6 3z" fill="#1020d0"/><circle cx="406" cy="781" r="4" fill="#b8b8b8"/>
<g class="axis"><text x="401" y="754" fill="#e04030">X</text><text x="412" y="759" fill="#1850e0">Z</text><text x="362" y="778" fill="#30a040">Y</text></g>
</svg>
</section>
</main>

<footer class="foot">
<svg class="orb" viewBox="0 0 28 8"><ellipse cx="14" cy="12" rx="13" ry="11" fill="#c6d4ea" stroke="#1c3c90"/></svg>
<div class="bar"><span class="grip"></span>
<button class="tool" aria-label="草图"><svg><use href="#sketch"/></svg></button>
<button class="finish" disabled><svg><use href="#flag"/></svg>完成草图</button>
<button class="tool" aria-label="轮廓"><svg><use href="#profile"/></svg></button><button class="tool" aria-label="直线"><svg><use href="#line"/></svg></button><button class="tool" aria-label="圆弧"><svg><use href="#arc"/></svg></button><button class="tool" aria-label="圆"><svg><use href="#circle"/></svg></button><button class="tool" aria-label="圆角"><svg><use href="#fillet"/></svg></button><button class="tool" aria-label="倒斜角"><svg><use href="#chamfer"/></svg></button><button class="tool" aria-label="矩形"><svg><use href="#rect"/></svg></button><button class="tool" aria-label="样条"><svg><use href="#spline"/></svg></button><button class="tool" aria-label="点"><svg><use href="#plus"/></svg></button><button class="tool" aria-label="偏置曲线"><svg><use href="#offs"/></svg></button><span class="caret"></span><span class="sep"></span>
<button class="tool" aria-label="快速修剪"><svg><use href="#qtrim"/></svg></button><button class="tool" aria-label="快速延伸"><svg><use href="#qext"/></svg></button><button class="tool" aria-label="制作拐角"><svg><use href="#corner"/></svg></button><span class="sep"></span>
<button class="tool" aria-label="自动判断尺寸"><svg><use href="#dim"/></svg></button><span class="caret"></span><span class="sep"></span>
<button class="tool" aria-label="约束"><svg><use href="#cons"/></svg></button><button class="tool" aria-label="自动约束"><svg><use href="#auto"/></svg></button><button class="tool" aria-label="显示约束"><svg><use href="#cons2"/></svg></button><span class="caret"></span><span class="sep"></span>
<button class="tool" aria-label="转换"><svg><use href="#pencilbox"/></svg></button><button class="tool" aria-label="备选解"><svg><use href="#tools"/></svg></button><button class="tool" aria-label="推断约束"><svg><use href="#tools"/></svg></button></div>
</footer>
</div>

<section class="measure" aria-label="测量体">
<header class="mtitle"><h2>测量体</h2>
<button class="wb" aria-label="重置"><svg viewBox="0 0 16 16"><path d="M9 3q5 1 4 6-2 5-9 3" fill="none" stroke="#fff" stroke-width="2.500"/><path d="M5 4l5-2v5z" fill="#fff"/></svg></button>
<button class="wb" aria-label="选项"><svg viewBox="0 0 16 16"><circle cx="8" cy="8" r="5" fill="none" stroke="#fff" stroke-width="3" stroke-dasharray="2 2"/><circle cx="8" cy="8" r="4" fill="none" stroke="#fff" stroke-width="2"/><circle cx="8" cy="8" r="1" fill="#fff"/></svg></button>
<button class="wb close" aria-label="关闭"><svg viewBox="0 0 16 16"><path d="M3 3l10 10M13 3L3 13" stroke="#fff" stroke-width="2"/></svg></button></header>
<div class="mbody">
<button class="fold"><span>对象</span><svg viewBox="0 0 24 22"><path d="M7 15l5-9 5 9" fill="none" stroke="#555" stroke-width="3"/></svg></button>
<div class="mrow pick"><div class="swatch"><svg class="tick" viewBox="0 0 12 12"><path d="M1 6l3 4 7-8" fill="none" stroke="#18a828" stroke-width="3"/></svg>选择体 <i>(1)</i></div>
<button class="cube" aria-label="体"><svg viewBox="0 0 24 24"><path d="M2 6l10-5 10 5v12l-10 5-10-5z" fill="#ffa010" stroke="#e83808"/><path d="M2 6l10 4v13l10-5V6" fill="#ffc020" stroke="#e83808"/><path d="M2 6l10-5 10 5-10 4z" fill="#ffe03a" stroke="#e83808"/></svg></button></div>
<button class="fold"><span>关联测量和检查</span><svg viewBox="0 0 24 22"><path d="M7 15l5-9 5 9" fill="none" stroke="#555" stroke-width="3"/></svg></button>
<div class="mrow need"><label for="need">需求</label><span class="combo"><select id="need"><option>无</option></select></span></div>
<button class="fold"><span>结果显示</span><svg viewBox="0 0 24 22"><path d="M7 15l5-9 5 9" fill="none" stroke="#555" stroke-width="3"/></svg></button>
<div class="mrow result"><svg viewBox="0 0 16 12"><ellipse cx="8" cy="6" rx="8" ry="6" fill="#2a8ae0"/></svg>显示信息窗口</div>
</div>
</section>

<section class="infowin" aria-label="信息">
<header class="ihead"><span class="iicon">i</span><h2>信息</h2>
<div class="aero"><button aria-label="最小化"><svg viewBox="0 0 27 17"><path d="M8 9h11v4H8z" fill="#fff" stroke="#555"/></svg></button><button aria-label="最大化"><svg viewBox="0 0 27 17"><path d="M8 4h11v9H8zM11 7h5v3h-5z" fill="#fff" fill-rule="evenodd" stroke="#555"/></svg></button><button class="x" aria-label="关闭"><svg viewBox="0 0 27 17"><path d="M9 4l9 9M18 4l-9 9" stroke="#555" stroke-width="4"/><path d="M9 4l9 9M18 4l-9 9" stroke="#fff" stroke-width="2.500"/></svg></button></div></header>
<div class="iclient">
<nav class="imenu"><button>文件(F)</button><button>编辑(E)</button></nav>
<div class="ibox">
<div class="listing">
<p class="rule">============================================================</p>
<p>信息列表创建者:      M</p>
<p>日期:                2019/5/23 13:48:42</p>
<p>当前工作部件:        D:\Ug-Word\catics-2-3D-2.prt</p>
<p>节点名:              sun</p>
<p class="rule">============================================================</p>
<p>测量质量属性</p>
<p class="rule"> </p>
<p>显示的质量属性值</p>
<p class="prop"><span>体积</span><span>=</span><mark>18991.854332942 mm^3 </mark></p>
<p class="prop"><span>面积</span><span>=</span>10066.070800928 mm^2</p>
<p class="prop"><span>质量</span><span>=</span>   0.148718374 kg</p>
<p class="prop"><span>重量</span><span>=</span>   1.458430360 N</p>
<p class="prop near"><span>回转半径</span><span>=</span>  21.752027861 mm</p>
<p class="prop"><span>质心</span><span>=</span><span class="v first">0.000034511,</span><span class="v mid">5.994723183,</span>16.167243411 mm</p>
<p class="rule"> </p>
<p class="rule">============================================================</p>
<p>详细的质量属性</p>
<p>使用精度计算的分析    0.990000000</p>
<p>信息单位     kg - mm</p>
</div>
<div class="vscroll"><button aria-label="向上"><svg viewBox="0 0 8 4"><path d="M0 4l4-4 4 4z"/></svg></button><span class="thumb"></span><button class="dn" aria-label="向下"><svg viewBox="0 0 8 4"><path d="M0 0l4 4 4-4z"/></svg></button></div>
</div>
</div>
</section>

<div class="readout"><span class="dots"></span><span class="combo"><select aria-label="测量项"><option>体积</option></select></span><output>=18991.8543 mm^3</output></div>

<div class="ime"><svg class="sogou" viewBox="0 0 28 28"><path d="M1 5l21-4 5 20-20 6z" fill="#f0501e"/><path d="M21 8q-6-4-12-1-4 3 1 5l8 2q4 3-1 6-6 2-11-1" fill="none" stroke="#fff" stroke-width="4"/></svg><span class="imebar"><b>英</b><svg viewBox="0 0 16 16"><circle cx="8" cy="8" r="7" fill="none" stroke="#1f74cf" stroke-width="1.500"/><path d="M6 4v3M10 4v3M4 9q4 5 8 0" fill="none" stroke="#1f74cf" stroke-width="1.500"/></svg><b>简</b></span></div>
<div class="meter"><span></span></div>
<div class="mark"><svg viewBox="0 0 74 84"><g transform="translate(-1156 -774)">
<path d="M1171 788L1193 775L1206 783Q1213 792 1213 803L1193 793Q1183 787 1171 788z" fill="#b7cff8"/>
<path d="M1206 783L1229 795V810Q1224 822 1213 827V803Q1213 791 1206 783z" fill="#2cb9fa"/>
<path d="M1229 810V837L1216 843Q1204 843 1194 838L1213 827Q1225 821 1229 810z" fill="#2385ee"/>
<path d="M1216 844L1193 857L1180 849Q1172 840 1174 828L1194 839Q1205 845 1216 844z" fill="#2cb9fa"/>
<path d="M1180 849L1157 837V823Q1161 812 1174 806V828Q1174 840 1180 849z" fill="#68b8fd"/>
<path d="M1157 822V795L1170 788Q1183 788 1193 793L1174 806Q1162 811 1157 822z" fill="#88d6ff"/>
<path d="M1193 793l20 11v23l-20 11-20-11v-23z" fill="#fff"/>
<path d="M1193 797l16 10-16 9-16-9z" fill="#88d6ff"/><path d="M1177 807l16 9v18l-16-8z" fill="#68b8fd"/><path d="M1209 807v19l-16 8v-18z" fill="#2385ee"/></g></svg></div>
</body>
</html>
```
FILE: styles.css
```css
* { box-sizing: border-box; }
html, body { margin: 0; height: 100%; }
body { font: 12px/16px "Noto Sans", "Noto Sans CJK SC", sans-serif; color: #000; overflow: hidden; position: relative; }
button, select { font: inherit; color: inherit; border: 0; background: none; padding: 0; margin: 0; }
h1, h2, p { margin: 0; font: inherit; }
svg { display: block; flex: none; }
.sprite { position: absolute; width: 0; height: 0; }
.i16 { width: 16px; height: 16px; }

.app { display: flex; flex-direction: column; height: 100vh; background: #d4d4d4; }

.titlebar { display: flex; align-items: center; height: 22px; padding: 0 0 0 4px; color: #fff; background: linear-gradient(#000 0 1px, #77767a 2px, #4b4a4d 8px, #1c1c1c 9px 100%); }
.title { flex: 1; padding-left: 4px; font-size: 13px; line-height: 20px; white-space: pre; }
.brand { font: bold 14px/20px "Open Sans", sans-serif; padding-right: 28px; }
.winbtns { display: flex; gap: 3px; }
.wb { width: 19px; height: 18px; border-radius: 3px; border: 1px solid #444; background: linear-gradient(#77777a, #3a3a3c); display: grid; place-items: center; }
.wb svg { width: 16px; height: 16px; }
.wb.close { background: linear-gradient(#f08a70, #d83418); border-color: #a03020; }

.menubar { display: flex; align-items: center; height: 27px; padding-left: 2px; background: #e4e4e4; border-bottom: 1px solid #bdbdbd; }
.menubar .i16 { margin: 0 2px 0 0; }
.menu { height: 22px; padding: 0 7px; white-space: nowrap; }
.menu i { font-size: 13px; }
.menu:first-of-type { padding-left: 4px; }
.docbtns { margin-left: auto; display: flex; gap: 4px; padding-right: 4px; }
.db { width: 16px; height: 16px; border: 1px solid #8a8a8a; border-radius: 3px; background: #f2f2f2; }
.db svg { width: 14px; height: 14px; }

.grip { flex: none; width: 6px; height: 26px; background: radial-gradient(circle at 2px 2px, #a2a2a2 1px, #f4f4f4 2px, transparent 2px) 0 0 / 6px 4px; }
.dock { background: linear-gradient(#dcdcdc, #cdcdcd); border-bottom: 1px solid #9a9a9a; }
.row { display: flex; height: 34px; }
.bar { display: flex; align-items: center; flex: none; padding: 0 2px; border-bottom: 2px solid #bcbcbc; border-right: 1px solid #b4b4b4; background: linear-gradient(#e2e2e2, #d2d2d2); }
.bar + .bar { border-left: 1px solid #f0f0f0; padding-left: 0; padding-right: 0; }
.lead { width: 791px; border-right: 0; overflow: hidden; }
.bar.inset.inset { padding-left: 11px; }
.tool { width: 31px; height: 30px; display: grid; place-items: center; flex: none; }
.tool svg, .start svg, .finder svg, .finish svg { width: 24px; height: 24px; }
.tagged { position: relative; }
.tagged b { position: absolute; left: 5px; top: 2px; font: bold 12px/12px "Liberation Sans", sans-serif; color: #1c2c90; }
.tagged.red b { color: #c02020; }
.caret { width: 12px; height: 30px; flex: none; display: grid; place-items: center; }
.caret::before, .tri { content: ""; border: 3px solid transparent; border-top-color: #111; border-bottom: 0; }
.caret.low { align-items: end; padding-bottom: 5px; }
.sep { flex: none; width: 6px; height: 30px; background: linear-gradient(90deg, transparent 2px, #b0b0b0 2px 3px, #f4f4f4 3px 4px, transparent 4px); }
.start { display: flex; align-items: center; width: 67px; gap: 3px; padding-left: 3px; flex: none; }
.tri { margin-left: 1px; }
.finder { display: flex; align-items: center; gap: 3px; width: 95px; padding-left: 3px; flex: none; white-space: nowrap; }

.selbar { display: flex; align-items: center; height: 30px; padding-left: 5px; background: linear-gradient(#c4c4c4, #dadada); border-bottom: 1px solid #b8b8b8; }
.combo { position: relative; display: block; height: 21px; border: 1px solid #777; border-radius: 3px; background: #fff; box-shadow: 0 1px 0 #f6f6f6; }
.combo select { appearance: none; width: 100%; height: 19px; padding: 0 20px 0 4px; line-height: 19px; outline: 0; }
.combo::after { content: ""; position: absolute; right: 0; top: 0; width: 17px; height: 19px; pointer-events: none; border-left: 1px solid #4f7cba; border-radius: 0 3px 3px 0; background: linear-gradient(#4c86d4, #b8dcff 70%, #7ab4f0); }
.combo::before { content: ""; position: absolute; z-index: 1; right: 3px; top: 7px; border: 5px solid transparent; border-top: 6px solid #10141c; border-bottom: 0; pointer-events: none; }
.selbar .combo { width: 146px; margin-right: 9px; }
.selbar .combo + .combo { width: 153px; margin-right: 4px; }
.small { width: 24px; height: 24px; display: grid; place-items: center; flex: none; }
.small svg { width: 17px; height: 17px; }
.selbar .sep { width: 7px; height: 26px; }
.selbar .caret { width: 8px; }
.solid { margin-left: 305px; }
.selbar .last { margin-left: auto; width: 18px; }

.prompt { display: flex; align-items: center; height: 22px; padding: 0 4px 0 3px; gap: 4px; background: #dadada; border-bottom: 1px solid #909090; font-weight: bold; }
.prompt p { flex: 1; font-size: 13px; }
.prompt .cell { width: 16px; height: 21px; border-left: 1px solid #a8a8a8; }
.prompt .cell.wide { width: 35px; border-right: 1px solid #a8a8a8; }

.main { flex: 1; display: flex; min-height: 0; }
.rail { width: 33px; flex: none; display: flex; flex-direction: column; align-items: flex-end; gap: 2px; padding: 17px 0 0; background: linear-gradient(90deg, #a2a2a2, #b8b8b8); border-right: 1px solid #777; }
.tab { width: 26px; height: 40px; flex: none; border: 1px solid #7c7c7c; border-right: 0; border-radius: 4px 0 0 4px; background: linear-gradient(#dcdcdc, #c8c8c8); display: grid; place-items: center; }
.tab svg { width: 23px; height: 23px; }
.tab.on { width: 28px; height: 43px; margin: -1px 0; background: #e8e8e8; }
.tab.apart { margin-top: 12px; }
.nav { width: 320px; flex: none; display: flex; flex-direction: column; padding: 0 10px 4px 9px; background: #e8e8e8; border-right: 2px solid #777; border-bottom: 1px solid #666; }
.navhead { display: flex; gap: 12px; align-items: center; height: 36px; padding-left: 6px; font: bold 13px/36px "Noto Sans CJK SC", sans-serif; }
.navhead svg { width: 12px; height: 12px; }
.tree { flex: 1; display: flex; flex-direction: column; min-height: 0; border: 1px solid #666; border-top-color: #aaa; background: #fff; }
.colhead { height: 20px; background: #eee; font-weight: bold; padding-left: 208px; }
.rows { flex: 1; display: flex; flex-direction: column; justify-content: flex-end; }
.trow { height: 20px; flex: none; display: flex; align-items: center; padding-left: 41px; border-bottom: 1px solid #dedede; background: linear-gradient(90deg, transparent 200px, #dedede 200px 201px, transparent 201px), #fff; position: relative; color: #222; }
.trow:nth-child(even) { background: linear-gradient(90deg, transparent 200px, #dedede 200px 201px, transparent 201px), #f6f6f6; }
.trow:not(.blank)::before { content: ""; position: absolute; left: 29px; top: 0; width: 10px; height: 10px; border-left: 1px dotted #888; border-bottom: 1px dotted #888; }
.trow label { display: flex; align-items: center; gap: 2px; white-space: pre; }
.trow i, .swatch i, .readout output { font-family: "DejaVu Sans", sans-serif; font-style: italic; }
.trow input { appearance: none; margin: 0; width: 12px; height: 12px; border: 1px solid #111; background: #fff; display: grid; place-items: center; }
.trow input::before { content: ""; width: 9px; height: 5px; border-left: 3px solid #12c020; border-bottom: 3px solid #12c020; transform: rotate(-48deg); }
.trow.cut { height: 11px; border-bottom: 0; }
.hscroll { display: flex; align-items: center; height: 17px; background: #f0f0f0; }
.hscroll button { width: 19px; height: 15px; display: grid; place-items: center; }
.hscroll button svg { width: 4px; height: 7px; }
.thumb { border: 1px solid #8c8c8c; border-radius: 2px; background: linear-gradient(#f4f4f4 45%, #d0d0d4 50%, #e0e0e4); }
.hscroll .thumb { flex: 1; height: 15px; display: grid; place-items: center; }
.hscroll .thumb::before { content: ""; width: 8px; height: 7px; background: repeating-linear-gradient(90deg, #666 0 1px, transparent 1px 3px); }
.split { height: 12px; display: grid; place-items: center; background: linear-gradient(transparent 5px, #aaa 5px 6px, transparent 6px); }
.split span { width: 52px; height: 6px; background: #d0d0d0; border: 1px solid #a8a8a8; }
.folds { display: flex; flex-direction: column; }
.fold { display: flex; justify-content: space-between; align-items: stretch; width: 100%; height: 23px; padding-left: 6px; text-align: left; font: bold 13px/22px "Noto Sans CJK SC", sans-serif; color: #111; background: linear-gradient(#fafafa, #ececec 50%, #dcdddf 55%, #e2e2e4); border-top: 1px solid #fff; border-bottom: 1px solid #999; }
.fold svg { width: 22px; height: 20px; border-left: 1px solid #b0b0b0; }

.view { flex: 1; min-width: 0; background: linear-gradient(#b3b4b6, #c8c9cb 27%, #dddee0 57%, #e6e7e9 72%); }
.scene { width: 100%; height: 100%; }
.axis { font: 12px "Noto Sans", sans-serif; }

.foot { display: flex; height: 35px; background: linear-gradient(#e0e0e0, #cccccc); border-top: 1px solid #f4f4f4; flex: none; }
.orb { width: 28px; height: 8px; margin: auto 0 0 13px; }
.foot .bar { margin-left: 311px; padding-left: 0; }
.finish { display: flex; align-items: center; gap: 3px; width: 82px; padding-left: 3px; color: #8a8a8a; white-space: nowrap; flex: none; }

.measure { position: absolute; left: 487px; top: 46px; width: 312px; border: 1px solid #222; border-bottom: 7px solid #111; border-radius: 6px; background: #e4e4e4; overflow: hidden; }
.mtitle { display: flex; align-items: center; gap: 2px; height: 23px; padding: 0 3px 0 8px; color: #fff; background: linear-gradient(#6a6a6c, #333 35%, #1c1c1c 40%); }
.mtitle h2 { flex: 1; }
.mbody { padding: 4px 5px 62px; }
.mbody .fold { border-left: 1px solid #999; height: 22px; line-height: 21px; }
.mrow { display: flex; align-items: center; background: #d2d2d2; border: 1px solid #999; border-top: 1px solid #999; }
.mrow.pick { height: 48px; padding: 0 8px 0 7px; justify-content: space-between; }
.swatch { display: flex; align-items: center; width: 238px; height: 30px; padding-left: 2px; border-radius: 5px; white-space: pre; color: #222; background: linear-gradient(90deg, #e2a96c 0 42%, #dfb183 42% 54%, #dab993 54% 67%, #d9c2a8 67% 76%, #d4c6ac 76% 81%, #d7cac0 81% 90%, #d4cfcb 90%); }
.tick { width: 12px; height: 12px; margin-right: 5px; }
.cube { width: 30px; height: 30px; border: 1px solid #7c6248; border-radius: 3px; background: linear-gradient(#ffe0c0, #ffb060 50%, #ffe8b0); display: grid; place-items: center; }
.cube svg { width: 24px; height: 24px; }
.need { height: 39px; padding: 0 8px 0 6px; justify-content: space-between; }
.need .combo { width: 129px; }
.result { height: 60px; padding: 8px 8px; gap: 4px; align-items: flex-start; background: #a8a8a8; }
.result svg { width: 16px; height: 14px; }

.infowin { position: absolute; left: 43px; top: 226px; width: 742px; padding: 0 7px 8px; border: 1px solid #222; border-radius: 7px; background: linear-gradient(100deg, rgba(236, 240, 247, .75), rgba(180, 190, 202, .4) 45%, rgba(215, 222, 230, .4) 80%, rgba(240, 244, 250, .6)); backdrop-filter: blur(3px); box-shadow: inset 0 0 0 1px rgba(255, 255, 255, .7), 0 3px 9px 2px rgba(0, 0, 0, .5); }
.ihead { display: flex; align-items: center; height: 28px; }
.iicon { width: 16px; height: 16px; background: #fff; color: #1440e0; text-align: center; font: italic bold 14px/16px "Liberation Serif", serif; }
.ihead h2 { flex: 1; padding-left: 5px; }
.aero { display: flex; align-self: flex-start; border: 1px solid #666; border-top: 0; border-radius: 0 0 4px 4px; overflow: hidden; }
.aero button { width: 27px; height: 18px; background: linear-gradient(#e8eaee, #c0c4cb 50%, #aeb3bb 55%, #d0d4da); border-right: 1px solid #666; display: grid; place-items: center; }
.aero svg { width: 27px; height: 17px; }
.aero .x { width: 47px; border-right: 0; background: linear-gradient(#e0a090, #c05848 50%, #a02c18 55%, #d87058); }
.iclient { border: 1px solid #555; background: #fff; }
.imenu { display: flex; height: 20px; padding-left: 6px; gap: 14px; background: linear-gradient(#fff, #e6ebf6 35%, #d4dbee 40%, #dfe4f4); border-bottom: 1px solid #b4b8c4; }
.ibox { display: flex; height: 342px; margin-top: 1px; border: 1px solid #555; border-bottom-color: #888; }
.listing { flex: 1; overflow: hidden; padding: 2px 0 0 2px; font: 13px/17px "Liberation Mono", "Noto Sans CJK SC", monospace; }
.listing p { height: 17px; white-space: pre; }
.listing .rule { height: 16px; line-height: 16px; }
.prop { display: flex; }
.prop span:first-child { width: 250px; }
.prop span:nth-child(2) { width: 16px; }
.prop.near span:first-child { width: 243px; }
.prop .v { width: 128px; }
.prop .v.first { margin-left: 24px; }
.prop .v.mid { width: 120px; }
mark { height: 17px; color: #fff; background: #3399ff; }
.vscroll { width: 17px; margin-right: 2px; display: flex; flex-direction: column; align-items: center; background: #f0f0f0; }
.vscroll button { height: 18px; width: 17px; display: grid; place-items: center; }
.vscroll button svg { width: 7px; height: 4px; }
.vscroll .thumb { width: 15px; height: 80px; background: linear-gradient(90deg, #f4f4f4 45%, #d0d0d4 50%, #e0e0e4); display: grid; place-items: center; }
.vscroll .thumb::before { content: ""; width: 7px; height: 8px; background: repeating-linear-gradient(#666 0 1px, transparent 1px 3px); }
.vscroll .dn { margin-top: auto; }

.readout { position: absolute; left: 1085px; top: 494px; width: 225px; height: 29px; display: flex; align-items: center; border: 1px solid #888; background: linear-gradient(#e0e0e0, #bcbcbc); white-space: nowrap; }
.dots { width: 12px; height: 27px; background: radial-gradient(circle at 2px 2px, #ccc 1px, transparent 1px) 1px 4px / 4px 4px, linear-gradient(90deg, #777, #111); }
.readout .combo { width: 75px; margin: 0 2px 0 5px; }

.ime { position: absolute; left: 1311px; top: 408px; display: flex; align-items: center; }
.sogou { width: 28px; height: 28px; position: relative; z-index: 1; }
.imebar { display: flex; align-items: center; gap: 6px; height: 24px; margin-left: -4px; padding: 0 4px 0 9px; border: 1px solid #b4c8de; background: #fff; color: #1f74cf; font: bold 15px/20px "Noto Sans CJK SC", sans-serif; }
.imebar svg { width: 16px; height: 16px; }
.meter { position: absolute; right: 0; top: 435px; width: 10px; height: 59px; padding: 6px 2px 6px 4px; border-radius: 4px 0 0 4px; background: #444648; }
.meter span { display: block; height: 46px; background: repeating-linear-gradient(transparent 0 2px, #444648 2px 3px), linear-gradient(#222 0 8px, #f08a30 8px 16px, #e8d040 16px 30px, #70d080 30px 42px, #70b8f0 42px); }
.mark { position: absolute; right: 5px; bottom: 5px; width: 299px; height: 98px; padding: 7px 20px; background: #fff; }
.mark svg { width: 74px; height: 84px; }
```
